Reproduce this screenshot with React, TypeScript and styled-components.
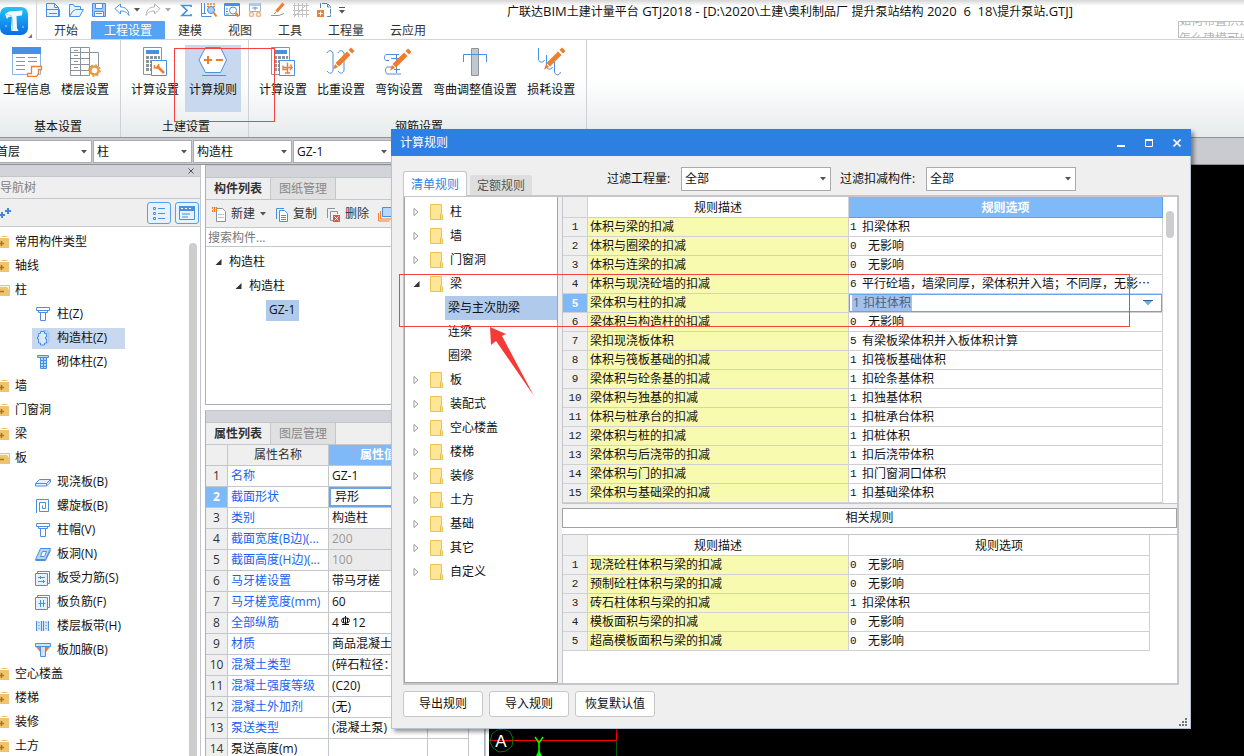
import React from "react";
import styled, { createGlobalStyle } from "styled-components";

const UI = `"Open Sans", "Noto Sans CJK SC", sans-serif`;
const BLUE = "#4a90e2";
const LINE = "#c3c6cb";

const Global = createGlobalStyle`
  * { box-sizing: border-box; }
  html, body { margin: 0; padding: 0; }
  body { font: 12px/18px ${UI}; color: #111; background: #fff; overflow: hidden; }
  button, input, select { font: inherit; color: inherit; margin: 0; padding: 0; border: 0; background: none; border-radius: 0; outline: 0; }
  button { white-space: nowrap; text-align: left; }
  ul { list-style: none; margin: 0; padding: 0; }
  svg { display: block; flex: none; }
  table { border-collapse: separate; border-spacing: 0; table-layout: fixed; }
  th, td { padding: 0; font-weight: normal; }
`;

/* ---------- shell ---------- */

const Shell = styled.div`
  position: relative;
  display: flex;
  flex-direction: column;
  height: 100vh;
  overflow: hidden;
  background: #fff;
`;
const Header = styled.header`
  display: flex;
  height: 40px;
  flex: none;
  background: linear-gradient(#d6d6d6, #fff 6px);
`;
const LogoBox = styled.div`
  display: flex;
  width: 37px;
  flex: none;
  border-right: 1px solid #d4d4d4;
`;
const HeaderMain = styled.div`
  flex: 1;
  display: flex;
  flex-direction: column;
  min-width: 0;
  border-bottom: 1px solid #d2d4d6;
`;
const TitleRow = styled.div`
  display: flex;
  align-items: center;
  height: 20px;
  margin-top: 1px;
`;
const QuickBar = styled.div`
  display: flex;
  align-items: center;
  width: 470px;
  height: 18px;
  padding: 0 0 2px 4px;
  flex: none;
`;
const QuickButton = styled.button<{ $w?: number; $gap?: number }>`
  display: flex;
  justify-content: center;
  align-items: center;
  width: ${(p) => p.$w ?? 23}px;
  margin-right: ${(p) => p.$gap ?? 0}px;
  height: 16px;
`;
const AppTitle = styled.h1`
  margin: 0;
  font-size: 12px;
  font-weight: normal;
  line-height: 18px;
  white-space: pre;
`;
const Latin = styled.span`
  font-size: 13px;
`;
const TabRow = styled.div`
  display: flex;
  justify-content: space-between;
  height: 18px;
`;
const MenuTabs = styled.nav`
  display: flex;
  padding-left: 4px;
`;
const MenuTab = styled.button<{ $on?: boolean }>`
  height: 18px;
  padding: 1px 13px 0;
  color: ${(p) => (p.$on ? "#fff" : "#333")};
  background: ${(p) => (p.$on ? "#55a3f5" : "transparent")};
  border-radius: 1px 1px 0 0;
`;
const Tips = styled.div`
  display: flex;
  flex-direction: column;
  justify-content: center;
  width: 66px;
  height: 17px;
  border: 1px solid #bdbdbd;
  border-right: 0;
  overflow: hidden;
  white-space: nowrap;
  color: #b5b5b5;
`;

/* ---------- ribbon ---------- */

const Ribbon = styled.div`
  display: flex;
  flex: none;
  height: 97px;
  margin-left: -8px;
  background: linear-gradient(#fff 40%, #e7ebec);
`;
const Group = styled.section`
  display: flex;
  flex-direction: column;
  justify-content: space-between;
  padding: 5px 6px 1px 5px;
  border-right: 1px solid #cfd2d5;
  &:first-child { padding-left: 6px; }
`;
const GroupItems = styled.div`
  display: flex;
`;
const GroupName = styled.div`
  padding-left: 4px;
  text-align: center;
`;
const Tool = styled.button<{ $on?: boolean }>`
  display: flex;
  flex-direction: column;
  align-items: center;
  gap: 4px;
  height: 67px;
  margin: 0 1px;
  padding: 0 4px;
  background: ${(p) => (p.$on ? "#c8d8ef" : "transparent")};
`;

/* ---------- selectors ---------- */

const PickerBar = styled.div`
  display: flex;
  gap: 1px;
  flex: none;
  height: 28px;
  padding: 2px 0;
  margin-left: -8px;
  background: #c9cbd0;
  border-top: 1px solid #8e9297;
  border-bottom: 1px solid #8d919b;
`;
const Picker = styled.span<{ $w: number; $h?: number }>`
  position: relative;
  display: inline-block;
  width: ${(p) => p.$w}px;
  height: ${(p) => p.$h ?? 23}px;
  border: 1px solid #a9abae;
  background: #fff;
  select {
    appearance: none;
    width: 100%;
    height: 100%;
    padding: 0 3px;
    line-height: 20px;
  }
  svg {
    position: absolute;
    right: 4px;
    top: 9px;
    pointer-events: none;
  }
`;

/* ---------- work area ---------- */

const Work = styled.div`
  display: flex;
  flex: 1;
  min-height: 0;
`;
const NavPanel = styled.aside`
  display: flex;
  flex-direction: column;
  width: 201px;
  flex: none;
  border-right: 1px solid ${LINE};
`;
const Grip = styled.div`
  display: flex;
  justify-content: flex-end;
  align-items: center;
  height: 12px;
  flex: none;
  padding-right: 6px;
  background: #d3d4da;
  border-bottom: 1px solid ${LINE};
  color: #666;
`;
const NavTitle = styled.div`
  height: 22px;
  flex: none;
  line-height: 22px;
  background: #efefef;
  color: #808080;
  border-bottom: 1px solid ${LINE};
`;
const NavTools = styled.div`
  display: flex;
  align-items: center;
  gap: 4px;
  height: 28px;
  flex: none;
  padding-right: 1px;
  background: #efefef;
  border-bottom: 1px solid ${LINE};
`;
const IconButton = styled.button<{ $box?: boolean }>`
  display: flex;
  align-items: center;
  justify-content: center;
  ${(p) => (p.$box ? `width: 24px; height: 22px; border: 1px solid #57a0ee; border-radius: 3px; background: #e7f2fd;` : `margin-right: auto;`)}
`;
const NavBody = styled.div`
  display: flex;
  justify-content: space-between;
  flex: 1;
  min-height: 0;
  overflow: hidden;
`;
const NavList = styled.ul`
  padding-top: 3px;
`;
const NavRow = styled.li`
  display: flex;
  align-items: center;
  height: 24px;
`;
const NavFolder = styled.button`
  display: flex;
  align-items: center;
  gap: 5px;
`;
const NavLeaf = styled.button<{ $on?: boolean }>`
  display: flex;
  align-items: center;
  gap: 6px;
  height: 21px;
  margin-left: 32px;
  padding: 0 18px 0 3px;
  background: ${(p) => (p.$on ? "#c8d8ef" : "transparent")};
`;
const NavThumb = styled.div`
  width: 8px;
  margin: 16px 3px 0 0;
  border-radius: 4px 4px 0 0;
  background: #cdcdcd;
`;

const Center = styled.div`
  display: flex;
  flex-direction: column;
  gap: 5px;
  width: 281px;
  flex: none;
  margin: 0 3px 0 4px;
  overflow: hidden;
  border-right: 1px solid ${LINE};
`;
const Panel = styled.section<{ $h?: number }>`
  display: flex;
  flex-direction: column;
  height: ${(p) => (p.$h ? `${p.$h}px` : "auto")};
  flex: none;
  border: 1px solid #adb0b5;
  border-top-color: ${LINE};
`;
const PanelTabs = styled.div`
  display: flex;
  height: 22px;
  flex: none;
  background: #efefef;
  border-bottom: 1px solid ${LINE};
`;
const PanelTab = styled.button<{ $on?: boolean }>`
  padding: 0 8px;
  line-height: 21px;
  border-right: 1px solid ${LINE};
  font-weight: ${(p) => (p.$on ? 600 : 400)};
  color: ${(p) => (p.$on ? "#333" : "#888")};
  background: ${(p) => (p.$on ? "#efefef" : "#e0e0e0")};
`;
const PanelTools = styled.div`
  display: flex;
  align-items: center;
  gap: 9px;
  height: 28px;
  flex: none;
  padding: 1px 0 0 6px;
  background: #efefef;
  border-bottom: 1px solid ${LINE};
`;
const PanelTool = styled.button`
  display: flex;
  align-items: center;
  gap: 5px;
  color: #333;
`;
const Search = styled.input`
  height: 19px;
  flex: none;
  padding: 0 2px;
  border-bottom: 1px solid ${LINE};
  &::placeholder { color: #777; opacity: 1; }
`;
const PartTree = styled.ul`
  padding: 3px 0 0 9px;
`;
const PartRow = styled.li<{ $level: number }>`
  display: flex;
  align-items: center;
  height: 24px;
  padding-left: ${(p) => p.$level * 20}px;
`;
const PartItem = styled.button<{ $on?: boolean }>`
  display: flex;
  align-items: center;
  gap: 7px;
  height: 21px;
  padding: 0 ${(p) => (p.$on ? 4 : 0)}px 0 ${(p) => (p.$on ? 3 : 0)}px;
  margin-left: ${(p) => (p.$on ? 11 : 0)}px;
  background: ${(p) => (p.$on ? "#b0caec" : "transparent")};
`;
const PropTable = styled.table`
  width: 263px;
  th, td {
    height: 21px;
    line-height: 20px;
    border-right: 1px solid ${LINE};
    border-bottom: 1px solid ${LINE};
    overflow: hidden;
    white-space: nowrap;
  }
  thead th { background: #efefef; color: #333; }
  thead th:nth-child(3) { background: #80b9f8; color: #fff; font-weight: 600; }
  thead th:nth-child(3), thead th:nth-child(4) { border-right-color: #9cc3ee; }
`;
const PropNo = styled.th<{ $on?: boolean }>`
  text-align: center;
  color: ${(p) => (p.$on ? "#fff" : "#333")};
  background: ${(p) => (p.$on ? "#80b9f8" : "#efefef")};
  font-weight: ${(p) => (p.$on ? 700 : 400)} !important;
`;
const PropName = styled.td<{ $plain?: boolean }>`
  padding-left: 3px;
  color: ${(p) => (p.$plain ? "#111" : "#1a5ff0")};
`;
const PropValue = styled.td<{ $on?: boolean; $off?: boolean }>`
  padding-left: ${(p) => (p.$on ? 6 : 3)}px;
  color: ${(p) => (p.$off ? "#999" : "#111")};
  background: ${(p) => (p.$off ? "#ebebeb" : "#fff")};
  ${(p) => p.$on && "box-shadow: inset 0 0 0 2px #6aa5ea;"}
`;
const Rebar = styled.span`
  display: inline-flex;
  align-items: center;
  gap: 1px;
  vertical-align: top;
  height: 20px;
  svg { margin-bottom: 4px; }
`;
const Canvas = styled.main`
  display: flex;
  align-items: flex-end;
  flex: 1;
  min-width: 0;
  background: #000;
`;

/* ---------- dialog ---------- */

const Dialog = styled.div`
  position: absolute;
  left: 391px;
  top: 129px;
  display: flex;
  flex-direction: column;
  width: 800px;
  height: 600px;
  background: #efefef;
  border: 1px solid #b4c3d8;
  border-top: 0;
  box-shadow: 3px 3px 4px rgba(0, 0, 0, 0.4);
`;
const DialogBar = styled.div`
  display: flex;
  align-items: center;
  height: 27px;
  flex: none;
  margin: 0 -1px;
  padding: 0 9px;
  background: #2d7fe1;
  color: #fff;
`;
const DialogTitle = styled.h2`
  flex: 1;
  margin: 0;
  font-size: 12px;
  font-weight: normal;
`;
const WindowButton = styled.button`
  display: flex;
  justify-content: center;
  width: 28px;
  &:last-child { width: 10px; margin-left: 9px; }
`;
const DialogTop = styled.div`
  display: flex;
  align-items: flex-end;
  height: 40px;
  flex: none;
  padding-left: 11px;
`;
const DialogTab = styled.button<{ $on?: boolean }>`
  position: relative;
  z-index: 1;
  height: ${(p) => (p.$on ? 25 : 20)}px;
  margin: 0 3px ${(p) => (p.$on ? 0 : 1)}px 0;
  padding: 1px 7px 0;
  border: ${(p) => (p.$on ? `1px solid ${LINE}` : "0")};
  border-bottom: 0;
  border-radius: 3px 3px 0 0;
  color: ${(p) => (p.$on ? "#2d84ea" : "#555")};
  background: ${(p) => (p.$on ? "#fff" : "#dedede")};
`;
const Filters = styled.div`
  display: flex;
  align-items: center;
  height: 24px;
  margin: 0 0 5px 72px;
`;
const FilterLabel = styled.label`
  width: 74px;
  white-space: nowrap;
  & ~ & { width: 86px; margin-left: 9px; }
`;
const Frame = styled.div`
  display: flex;
  gap: 4px;
  flex: 1;
  min-height: 0;
  margin: -1px 11px 0;
  border: 2px solid #c4c6cb;
  border-left-width: 1px;
`;
const RuleTree = styled.ul`
  width: 154px;
  flex: none;
  padding-top: 3px;
  border: 1px solid #a2a4a8;
  border-top: 0;
  background: #fff;
`;
const RuleRow = styled.button`
  display: flex;
  align-items: center;
  width: 100%;
  height: 24px;
  padding-left: 8px;
  svg + svg { margin: 0 7px 0 10px; }
`;
const RuleChild = styled.button<{ $on?: boolean }>`
  display: block;
  width: calc(100% - 40px);
  height: 24px;
  margin-left: 40px;
  padding-left: 3px;
  background: ${(p) => (p.$on ? "#b0caec" : "transparent")};
`;
const RuleColumn = styled.div`
  display: flex;
  flex-direction: column;
  flex: 1;
  min-width: 0;
`;
const RulePane = styled.div<{ $rest?: boolean }>`
  display: flex;
  justify-content: space-between;
  align-items: flex-start;
  background: #fff;
  border-left: 1px solid ${LINE};
  border-bottom: 1px solid ${LINE};
  ${(p) => p.$rest && `flex: 1; border-bottom: 0; border-top: 1px solid ${LINE};`}
`;
const RuleGrid = styled.table<{ $narrow?: boolean }>`
  width: ${(p) => (p.$narrow ? 587 : 600)}px;
  thead th { height: 21px; padding-top: 1px; background: #fff; }
  tbody th, tbody td { height: 19px; line-height: 18px; }
  th, td {
    border-right: 1px solid #cfd1d4;
    border-bottom: 1px solid #cfd1d4;
    white-space: nowrap;
    overflow: hidden;
  }
  thead th:first-child { background: #efefef; }
`;
const HotHead = styled.th<{ $on?: boolean }>`
  ${(p) => p.$on && `&&&& { background: #80b9f8; border-color: #5e9fe8; } color: #fff; font-weight: 700;`}
`;
const RuleNo = styled.th<{ $on?: boolean }>`
  font-family: ${(p) => (p.$on ? `"Liberation Sans"` : `"Liberation Mono"`)}, monospace;
  font-size: 11px;
  font-weight: ${(p) => (p.$on ? 700 : 400)};
  color: ${(p) => (p.$on ? "#fff" : "#222")};
  background: ${(p) => (p.$on ? "#80b9f8" : "#efefef")};
`;
const RuleText = styled.td`
  padding-left: 2px;
  background: #f8fab0;
`;
const RuleOption = styled.td<{ $edit?: boolean }>`
  padding-left: 1px;
  background: #fff;
  ${(p) => p.$edit && "box-shadow: inset 0 0 0 1px #6aa5ea;"}
`;
const Code = styled.span<{ $wide?: boolean }>`
  display: inline-block;
  width: ${(p) => (p.$wide ? 18 : 12)}px;
  height: 18px;
  vertical-align: top;
  font-family: "Liberation Mono", monospace;
  font-size: 11px;
`;
const Editor = styled.div`
  display: flex;
  align-items: center;
  justify-content: space-between;
  height: 18px;
  padding: 0 9px 0 2px;
`;
const EditorInput = styled.input`
  width: 60px;
  height: 16px;
  padding-left: 1px;
  color: #4d617c;
  background: #a3c1ea;
`;
const RuleThumb = styled.div`
  width: 8px;
  height: 27px;
  margin: 14px 3px 0 0;
  border-radius: 4px;
  background: #cdcdcd;
`;
const RelatedBar = styled.div`
  height: 20px;
  flex: none;
  margin: 4px 0 0;
  border: 1px solid #a0a2a5;
  background: #fff;
  text-align: center;
`;
const RelatedGap = styled.div`
  height: 6px;
  flex: none;
  background: #fff;
`;
const DialogFoot = styled.div`
  display: flex;
  align-items: flex-start;
  gap: 6px;
  height: 43px;
  flex: none;
  padding: 6px 3px 2px 11px;
  svg { margin: auto 0 0 auto; }
`;
const PushButton = styled.button`
  width: 80px;
  height: 26px;
  border: 1px solid #c5c7ca;
  border-radius: 3px;
  background: #fff;
  text-align: center;
`;

/* ---------- annotations ---------- */

const Mark = styled.div<{ $x: number; $y: number; $w: number; $h: number }>`
  position: absolute;
  left: ${(p) => p.$x}px;
  top: ${(p) => p.$y}px;
  width: ${(p) => p.$w}px;
  height: ${(p) => p.$h}px;
  border: 1px solid #f5413f;
  pointer-events: none;
`;
const Pointer = styled.svg`
  position: absolute;
  left: 485px;
  top: 323px;
  pointer-events: none;
`;

/* ---------- icons ---------- */

const OR = "#f08030";
const GR = "#8a949c";

const Caret = ({ c = "#555" }: { c?: string }) => (
  <svg width="6" height="4" viewBox="0 0 6 4"><path d="M0 0h6L3 3.5z" fill={c} /></svg>
);
const Svg = ({ w = 16, h = 16, children }: { w?: number; h?: number; children: React.ReactNode }) => (
  <svg width={w} height={h} viewBox={`0 0 ${w} ${h}`} fill="none" stroke={BLUE}>{children}</svg>
);

const Logo = () => (
  <svg width="36" height="40" viewBox="0 0 36 40">
    <defs>
      <linearGradient id="lg" x1="0" y1="0" x2="0" y2="1">
        <stop offset="0" stopColor="#22c3fb" /><stop offset="1" stopColor="#0a6ce0" />
      </linearGradient>
    </defs>
    <rect x="0" y="7" width="28" height="28" rx="7" fill="url(#lg)" />
    <path d="M5 14l4-2.500 13.500-1-.5 5-5.500.5.5 12 1.500 3h-7l-.5-3 1-11.500-3.500.5-1.500 2z" fill="#f2fbff" />
    <path d="M12.500 18v12M6 14l6 2" stroke="#a8dcfa" strokeWidth="1" />
    <path d="M32 34v4h-4z" fill="#777" />
    <circle cx="6" cy="26" r=".7" fill="#fff" /><circle cx="23" cy="27" r=".7" fill="#fff" />
  </svg>
);

const quick = {
  save: <Svg><path d="M1.500 1.500h8l4 4v9h-12zM9.500 1.500v4h4M1.500 7.500h13v7h-13zM4 11.500h8" fill="#e8f2fd" /></Svg>,
  open: <Svg><path d="M1.500 14.500v-12h4l1 2h6v3M1.500 14.500l3-5 3-2h8l-4 7z" fill="#e8f2fd" /></Svg>,
  disk: <Svg><path d="M1.500 1.500h13v13h-13z" fill="#a8ccf5" /><path d="M4.500 1.500h7v5h-7zM3.500 9.500h9v5h-9zM5 11.500h6" fill="#fff" /></Svg>,
  undo: <Svg><path d="M1 6.500L6.500 2v3c5 0 8 2.500 8.500 8.500-2-3.500-4.500-4.500-8.500-4.500v3z" /></Svg>,
  redo: <Svg><path d="M15 6.500L9.500 2v3c-5 0-8 2.500-8.500 8.500 2-3.500 4.500-4.500 8.500-4.500v3z" stroke="#b4b4b4" /></Svg>,
  sum: <Svg><path d="M13 5V3.500H4L9 8.500l-5 5h9V12" strokeWidth="1.700" /></Svg>,
  find: <Svg><path d="M.5 1v13.500h10M3.500 1v10M1 11.500h4" /><path d="M6 2h8M6 4.500h8" stroke={OR} strokeDasharray="2 1" strokeWidth="1.500" /><circle cx="10" cy="8" r="3.500" fill="#a8ccf5" /><path d="M12.500 10.500l3 4" stroke={OR} strokeWidth="2" /></Svg>,
  view: <Svg><path d="M.5 1.500h15v12H.5z" /><path d="M1 2.500h14" strokeWidth="3" /><circle cx="9" cy="8.500" r="3.500" fill="#fff" /><path d="M2 7h2M2 9.500h2M2 12h3" /><path d="M11.500 11l3 3.500" stroke={OR} strokeWidth="2.500" /></Svg>,
  sheet: <Svg><path d="M2.500 1.500h11v8h-11z" stroke="#9fb3c8" /><path d="M3 2.500h10" strokeWidth="3" stroke="#a8ccf5" /><path d="M5 6h6M8 4.500v4" stroke={GR} /><circle cx="4.500" cy="12.500" r="2" stroke="#f3b489" strokeWidth="1.500" /><circle cx="11.500" cy="12.500" r="2" stroke="#f3b489" strokeWidth="1.500" /></Svg>,
  pen: <Svg><path d="M13.500 1.500l-7 8" stroke={OR} strokeWidth="3" /><path d="M6.500 9.500L4 12" stroke={OR} /><path d="M1 13.500h8l5-2" stroke="#999" /></Svg>,
  mesh: <Svg><path d="M1.500 1v14M5.500 1v14M9.500 1v14M13.500 1v14M0 3.500h16M0 8.500h16M0 12.500h16M2 14L14 2" stroke="#c2c2c2" /></Svg>,
  add: <Svg><path d="M4.500 6V1.500h7l3 3v10H10M11.500 2v3h3" strokeDasharray="5 1" stroke="#5c7f9f" /><path d="M1 8h7v7H1z" fill={OR} stroke="none" /><path d="M4.500 9.500v4M2.500 11.500h4" stroke="#fff" /></Svg>,
};

const Pencil = ({ x, y }: { x: number; y: number }) => (
  <g transform={`translate(${x} ${y})`} stroke="none" fill="#f07d2c">
    <path d="M14 3.500l3.500 3.500L6 18.500 2.500 15zM15.500 2l2.500-2.500L21.500 3 19 5.500zM2 16l3 3-5 2.500z" />
  </g>
);
const CalcBase = () => (
  <>
    <path d="M4.500.5h18v27h-18z" stroke={GR} fill="#fff" />
    <path d="M7 3h13v4H7z" fill={BLUE} stroke="none" />
    <path d="M7 10.500h14M7 14.500h14M7 18.500h14M7 22.500h14" stroke={GR} strokeWidth="3" strokeDasharray="3 1" />
    <path d="M12.500 13.500h15v15h-15z" fill="#fff" />
  </>
);
const big = {
  info: <Svg w={32} h={32}><path d="M1.500 2.500h28v27h-28z" stroke="#8ab4e8" fill="#fff" /><path d="M1 2h29v7H1z" fill={BLUE} stroke="none" /><path d="M5 12.500h9M17 12.500h9M5 16.500h9M17 16.500h9M5 20.500h9M5 24.500h9" stroke={GR} /><path d="M20.500 21.500h10v3h-3v4l-2 3h-9v-3h4z" stroke={OR} fill="#fff" strokeWidth="1.300" /></Svg>,
  floor: <Svg w={32} h={32}><path d="M1.500 2.500h19v28h-19zM1.500 7.500h19M1.500 13.500h19M1.500 19.500h19M1.500 25.500h19M11.500 2.500v28M5 5.500h4M5 10.500h4M5 16.500h4M5 22.500h4M20.500 7.500h9v14h-9" stroke={GR} /><circle cx="25.500" cy="25.500" r="4" stroke="#e89a45" fill="#fff" strokeWidth="2.400" /><circle cx="25.500" cy="25.500" r="5.600" stroke="#e89a45" strokeDasharray="2 2.400" strokeWidth="1.600" /></Svg>,
  calc: <Svg w={32} h={32}><g transform="translate(0 2)"><CalcBase /><path d="M18 19l7 7" stroke={OR} strokeWidth="2.600" /><path d="M15.500 18v3h4v-4" stroke={OR} strokeWidth="1.500" /></g></Svg>,
  rule: <Svg w={32} h={32}><path d="M8.500 2.500h15l6 12.500-6 12.500h-15L2 15z" fill="#fff" /><path d="M7 15h8M11 11v8M19 15h7" stroke="#f07d2c" strokeWidth="2" /><path d="M5 30.500h24" /></Svg>,
  calc2: <Svg w={32} h={32}><g transform="translate(0 2)"><CalcBase /><path d="M20.500 15.500v11M16 20.500h9l-1.500-3M25 20.500l-2 2.500M16 18.500v4h4M18 26h5" stroke="#f07d2c" strokeWidth="1.400" /></g></Svg>,
  weight: <Svg w={32} h={32}><path d="M2 8c1-3 5-3 6 0v17c-.5 4-4 4-6 1M13 8c1-3 5-3 6 0v17c-.5 4-4 4-6 1" /><Pencil x={8} y={3} /></Svg>,
  hook: <Svg w={32} h={32}><path d="M3 9.500h13M3 9.500c-2 2-2 5 0 6h3M15 13.500H8M11 22h-7c-2 1-2 5 0 7h14M13.500 10v18M11 13.500h6M11 24.500h6" /><Pencil x={7} y={4} /></Svg>,
  bend: <Svg w={32} h={32}><path d="M12.500 3.500h7v27h-7z" fill="#c3c8cc" stroke={GR} /><path d="M4.500 17V9.500h23V17" /></Svg>,
  loss: <Svg w={32} h={32}><path d="M3.500 3v11c0 4 5 4 6 1M11.500 10v11c0 4 5 4 6 1M19.500 17v9c0 5 5 5 6 1" /><Pencil x={9} y={3} /></Svg>,
};

const navIcons: Record<string, React.ReactNode> = {
  column: <path d="M1.500 1.500h13v3h-13zM3.500 4.500h9v2h-9zM5.500 6.500h5v8h-5z" fill="#fff" />,
  tie: <><path d="M8 .500h4l2 3v8l-2 2" fill="#b9d5f6" stroke="#9cc3ee" /><path d="M5.500 1.500h4v2h2v3.500h-1v2h1V13h-2v2h-4v-2h-2V9h-1V7h1V3.500h2z" fill="#dbe9fa" /></>,
  brick: <><path d="M2.500 1.500h11v2h-11zM5.500 3.500h6v11h-6z" fill="#b9d5f6" /><path d="M5.500 6.500h6M5.500 9.500h6M5.500 12.500h6M8.500 4v10" /></>,
  slab: <path d="M.5 9.500l4-4h11v2.500l-4 4H.500zM.5 9.500h11v2.500M11.500 9.500l4-4" fill="#e6f1fd" />,
  spiral: <path d="M1.500 15v-13.500h12v12H4.500v-9h6v6H7.500v-3" />,
  hole: <><path d="M5.500 2.500h10l-5 11H.5z" fill="#b9d5f6" /><path d="M7.500 5.500h4l-2 5h-4z" fill="#fff" /><path d="M.5 14.500h10l5-10" /></>,
  bar: <><path d="M.5 3.500h12v12H.5z" fill="#e6f1fd" /><path d="M2.500 3V1.500h12v12H13M3 7.500h7M3 11.500h7M5.500 6v3M8.500 10v3" /></>,
  neg: <><path d="M.5 3.500h12v12H.5z" fill="#e6f1fd" /><path d="M2.500 3V1.500h12v12H13M5.500 6v7M8.500 6v7M3.500 9.500h7" /></>,
  strip: <><path d="M1 3h13v10H1z" fill="#d3e5fa" stroke="none" /><path d="M1.500 3v10M13.500 3v10M6.500 3v10M8.500 3v10" /><path d="M4 4v9M11 4v9" strokeDasharray="1 2" /></>,
  haunch: <><path d="M1 5h14l-4 5H5z" fill="#f07d2c" stroke="none" /><path d="M.5 1.500h15v3H.500zM5.500 4.500h5v10h-5z" fill="#cfe2fa" /></>,
};

const NavFolderIcon = ({ open }: { open?: boolean }) => (
  <svg width="10" height="14" viewBox="0 0 10 14">
    <path d={open ? "M0 2h10v11H0z" : "M0 3h9v10H0zM2 1h5l1 1H1z"} fill="#efc46f" />
    {open ? <path d="M0 4h7l2 3v-4H0z" fill="#fff3d8" /> : null}
    <path d={open ? "M0 8.500h4" : "M0 8.500h4M1.500 6v5"} stroke="#a87622" strokeWidth="1.500" />
  </svg>
);
const Folder = () => (
  <svg width="13" height="16" viewBox="0 0 13 16">
    <path d="M.5.5h11v9l1 1v5H.500z" fill="#fde696" stroke="#ecc352" />
    <path d="M10.500 15V9.500" stroke="#e5b94a" />
  </svg>
);
const Twist = ({ open }: { open?: boolean }) => (
  <svg width="7" height="8" viewBox="0 0 7 8">
    {open ? <path d="M6.500 1v6H.5z" fill="#333" /> : <path d="M1 .5v7L5 4z" fill="#fff" stroke="#999" />}
  </svg>
);

/* ---------- data ---------- */

type NavEntry = { t: string; icon?: string; open?: boolean; on?: boolean };
const nav: NavEntry[] = [
  { t: "常用构件类型" }, { t: "轴线" }, { t: "柱", open: true },
  { t: "柱(Z)", icon: "column" }, { t: "构造柱(Z)", icon: "tie", on: true }, { t: "砌体柱(Z)", icon: "brick" },
  { t: "墙" }, { t: "门窗洞" }, { t: "梁" }, { t: "板", open: true },
  { t: "现浇板(B)", icon: "slab" }, { t: "螺旋板(B)", icon: "spiral" }, { t: "柱帽(V)", icon: "column" },
  { t: "板洞(N)", icon: "hole" }, { t: "板受力筋(S)", icon: "bar" }, { t: "板负筋(F)", icon: "neg" },
  { t: "楼层板带(H)", icon: "strip" }, { t: "板加腋(B)", icon: "haunch" },
  { t: "空心楼盖" }, { t: "楼梯" }, { t: "装修" }, { t: "土方" },
];

const ribbon = [
  { name: "基本设置", items: [["工程信息", big.info], ["楼层设置", big.floor]] },
  { name: "土建设置", items: [["计算设置", big.calc], ["计算规则", big.rule]] },
  { name: "钢筋设置", items: [["计算设置", big.calc2], ["比重设置", big.weight], ["弯钩设置", big.hook], ["弯曲调整值设置", big.bend], ["损耗设置", big.loss]] },
] as { name: string; items: [string, React.ReactNode][] }[];

const RebarSign = () => (
  <svg width="11" height="10" viewBox="0 0 11 10" fill="none" stroke="#111">
    <ellipse cx="5.500" cy="4.500" rx="4" ry="2.700" /><path d="M5.500 0v9M3.500 2v5M7.500 2v5M2 8.500h7" />
  </svg>
);

const props: { n: string; v: React.ReactNode; on?: boolean; off?: boolean; plain?: boolean }[] = [
  { n: "名称", v: "GZ-1" },
  { n: "截面形状", v: "异形", on: true },
  { n: "类别", v: "构造柱" },
  { n: "截面宽度(B边)(...", v: "200", off: true },
  { n: "截面高度(H边)(...", v: "100", off: true },
  { n: "马牙槎设置", v: "带马牙槎" },
  { n: "马牙槎宽度(mm)", v: "60" },
  { n: "全部纵筋", v: <Rebar>4<RebarSign />12</Rebar> },
  { n: "材质", v: "商品混凝土" },
  { n: "混凝土类型", v: "(碎石粒径：" },
  { n: "混凝土强度等级", v: "(C20)" },
  { n: "混凝土外加剂", v: "(无)" },
  { n: "泵送类型", v: "(混凝土泵)" },
  { n: "泵送高度(m)", v: "", plain: true },
];

type Rule = [string, string, string];
const rules: Rule[] = [
  ["体积与梁的扣减", "1", "扣梁体积"],
  ["体积与圈梁的扣减", "0", "无影响"],
  ["体积与连梁的扣减", "0", "无影响"],
  ["体积与现浇砼墙的扣减", "6", "平行砼墙，墙梁同厚，梁体积并入墙；不同厚，无影⋯"],
  ["梁体积与柱的扣减", "1", "扣柱体积"],
  ["梁体积与构造柱的扣减", "0", "无影响"],
  ["梁扣现浇板体积", "5", "有梁板梁体积并入板体积计算"],
  ["体积与筏板基础的扣减", "1", "扣筏板基础体积"],
  ["梁体积与砼条基的扣减", "1", "扣砼条基体积"],
  ["梁体积与独基的扣减", "1", "扣独基体积"],
  ["体积与桩承台的扣减", "1", "扣桩承台体积"],
  ["梁体积与桩的扣减", "1", "扣桩体积"],
  ["梁体积与后浇带的扣减", "1", "扣后浇带体积"],
  ["梁体积与门的扣减", "1", "扣门窗洞口体积"],
  ["梁体积与基础梁的扣减", "1", "扣基础梁体积"],
];
const related: Rule[] = [
  ["现浇砼柱体积与梁的扣减", "0", "无影响"],
  ["预制砼柱体积与梁的扣减", "0", "无影响"],
  ["砖石柱体积与梁的扣减", "1", "扣梁体积"],
  ["模板面积与梁的扣减", "0", "无影响"],
  ["超高模板面积与梁的扣减", "0", "无影响"],
];

/* ---------- parts ---------- */

const Select = ({ id, label, value, w, h }: { id: string; label?: string; value: string; w: number; h?: number }) => (
  <Picker $w={w} $h={h}>
    <select id={id} aria-label={label} defaultValue={value}><option>{value}</option></select>
    <Caret />
  </Picker>
);

const Rules = ({ rows, active, narrow }: { rows: Rule[]; active?: number; narrow?: boolean }) => (
  <RuleGrid $narrow={narrow}>
    <colgroup><col style={{ width: 25 }} /><col style={{ width: 261 }} /><col /></colgroup>
    <thead><tr><th aria-label="序号" /><th>规则描述</th><HotHead $on={active !== undefined}>规则选项</HotHead></tr></thead>
    <tbody>
      {rows.map(([d, code, text], i) => (
        <tr key={d}>
          <RuleNo $on={i === active}>{i + 1}</RuleNo>
          <RuleText>{d}</RuleText>
          {i === active ? (
            <RuleOption $edit>
              <Editor>
                <EditorInput aria-label={d} defaultValue={`${code} ${text}`} />
                <button aria-label="展开选项">
                  <svg width="10" height="6" viewBox="0 0 10 6"><path d="M0 0h10L5 5.500z" fill="#6fb0e4" /><path d="M0 .5h10" stroke="#2a5f95" /></svg>
                </button>
              </Editor>
            </RuleOption>
          ) : (
            <RuleOption><Code $wide={code === "0"}>{code}</Code>{text}</RuleOption>
          )}
        </tr>
      ))}
    </tbody>
  </RuleGrid>
);

const RuleFolder = ({ t, open }: { t: string; open?: boolean }) => (
  <li><RuleRow><Twist open={open} /><Folder />{t}</RuleRow></li>
);

export default function App() {
  return (
    <Shell>
      <Global />
      <Header>
        <LogoBox><Logo /></LogoBox>
        <HeaderMain>
          <TitleRow>
            <QuickBar>
              <QuickButton aria-label="新建">{quick.save}</QuickButton>
              <QuickButton aria-label="打开">{quick.open}</QuickButton>
              <QuickButton aria-label="保存">{quick.disk}</QuickButton>
              <QuickButton aria-label="撤销">{quick.undo}</QuickButton>
              <QuickButton $w={8} aria-label="撤销列表"><Caret /></QuickButton>
              <QuickButton aria-label="恢复">{quick.redo}</QuickButton>
              <QuickButton $w={8} $gap={2} aria-label="恢复列表"><Caret c="#aaa" /></QuickButton>
              <QuickButton aria-label="汇总">{quick.sum}</QuickButton>
              <QuickButton aria-label="查找">{quick.find}</QuickButton>
              <QuickButton aria-label="查看">{quick.view}</QuickButton>
              <QuickButton aria-label="报表">{quick.sheet}</QuickButton>
              <QuickButton aria-label="编辑">{quick.pen}</QuickButton>
              <QuickButton aria-label="网格">{quick.mesh}</QuickButton>
              <QuickButton aria-label="添加">{quick.add}</QuickButton>
              <QuickButton $w={14} aria-label="自定义">
                <svg width="6" height="7" viewBox="0 0 6 7"><path d="M0 .5h6" stroke="#555" /><path d="M0 3h6L3 6.500z" fill="#555" /></svg>
              </QuickButton>
            </QuickBar>
            <AppTitle>
              广联达<Latin>BIM</Latin>土建计量平台<Latin>{" GTJ2018 - [D:\\2020\\"}</Latin>土建<Latin>\</Latin>奥利制品厂<Latin> </Latin>提升泵站结构<Latin>{" 2020  6  18\\"}</Latin>提升泵站<Latin>.GTJ]</Latin>
            </AppTitle>
          </TitleRow>
          <TabRow>
            <MenuTabs>
              {["开始", "工程设置", "建模", "视图", "工具", "工程量", "云应用"].map((t) => (
                <MenuTab key={t} $on={t === "工程设置"}>{t}</MenuTab>
              ))}
            </MenuTabs>
            <Tips><span>如何布置拱过</span><span>怎么建模可以</span></Tips>
          </TabRow>
        </HeaderMain>
      </Header>

      <Ribbon>
        {ribbon.map((g) => (
          <Group key={g.name}>
            <GroupItems>
              {g.items.map(([t, icon]) => (
                <Tool key={t} $on={t === "计算规则"}>{icon}{t}</Tool>
              ))}
            </GroupItems>
            <GroupName>{g.name}</GroupName>
          </Group>
        ))}
      </Ribbon>

      <PickerBar>
        <Select id="floor" label="楼层" value="首层" w={100} />
        <Select id="kind" label="构件大类" value="柱" w={99} />
        <Select id="type" label="构件类型" value="构造柱" w={99} />
        <Select id="part" label="构件" value="GZ-1" w={99} />
      </PickerBar>

      <Work>
        <NavPanel>
          <Grip>
            <button aria-label="关闭导航树"><svg width="6" height="6" viewBox="0 0 6 6" stroke="#555"><path d="M.5.5l5 5M5.500.5l-5 5" /></svg></button>
          </Grip>
          <NavTitle>导航树</NavTitle>
          <NavTools>
            <IconButton aria-label="全部展开">
              <svg width="12" height="12" viewBox="0 0 12 12" stroke="#3f87d8" strokeWidth="2"><path d="M0 8h5M2 5v6M5 4h6M8 1v6" /></svg>
            </IconButton>
            <IconButton $box aria-label="列表">
              <Svg w={14} h={14}><path d="M1.500 1.500h2v2h-2zM1.500 6.500h2v2h-2zM1.500 11.500h2v2h-2zM6 2.500h7M6 7.500h7M6 12.500h7" /></Svg>
            </IconButton>
            <IconButton $box aria-label="窗口">
              <Svg w={16} h={14}><path d="M.5.5h15v13H.5z" /><path d="M0 2.500h16" strokeWidth="5" /><path d="M2 2.500h2M6 2.500h2M10 2.500h2" stroke="#fff" /><path d="M3 8h8M3 11h6" /></Svg>
            </IconButton>
          </NavTools>
          <NavBody>
            <NavList>
              {nav.map((n, i) => (
                <NavRow key={i}>
                  {n.icon ? (
                    <NavLeaf $on={n.on}><Svg>{navIcons[n.icon]}</Svg>{n.t}</NavLeaf>
                  ) : (
                    <NavFolder><NavFolderIcon open={n.open} />{n.t}</NavFolder>
                  )}
                </NavRow>
              ))}
            </NavList>
            <NavThumb />
          </NavBody>
        </NavPanel>

        <Center>
          <Panel $h={240}>
            <Grip />
            <PanelTabs><PanelTab $on>构件列表</PanelTab><PanelTab>图纸管理</PanelTab></PanelTabs>
            <PanelTools>
              <PanelTool>
                <Svg w={14} h={15}><path d="M4.500 1.500h6l3 3v10h-9z" stroke={GR} fill="#fff" /><path d="M6 7.500h6M6 10.500h6" stroke="#c3c6cb" /><path d="M0 1h5M0 4h5M2.500 0v6" stroke={OR} strokeDasharray="1 1" strokeWidth="2" /></Svg>
                新建 <Caret />
              </PanelTool>
              <PanelTool>
                <Svg w={13} h={15}><path d="M9 1.500H1.500V12" /><path d="M4.500 3.500h5l3 3v8h-8z" fill="#fff" /><path d="M6 8.500h5M6 10.500h5M6 12.500h5" /></Svg>
                复制
              </PanelTool>
              <PanelTool>
                <Svg w={14} h={15}><path d="M9 1.500H1.500V11M7 13.500H4.500v-9h7V7" stroke={GR} /><path d="M7 8h7v7H7z" fill="#d9544f" stroke="none" /><path d="M8.500 9.500l4 4M12.500 9.500l-4 4" stroke="#fff" /></Svg>
                删除
              </PanelTool>
              <PanelTool aria-label="层间复制">
                <Svg><path d="M4.500 1.500h14v9h-14z" fill="#b9d8fb" /><path d="M2.500 5v8h11M.5 7v8h11" stroke={OR} /></Svg>
              </PanelTool>
            </PanelTools>
            <Search aria-label="搜索构件" placeholder="搜索构件..." />
            <PartTree>
              <PartRow $level={0}><PartItem><Twist open />构造柱</PartItem></PartRow>
              <PartRow $level={1}><PartItem><Twist open />构造柱</PartItem></PartRow>
              <PartRow $level={2}><PartItem $on>GZ-1</PartItem></PartRow>
            </PartTree>
          </Panel>
          <Panel>
            <Grip />
            <PanelTabs><PanelTab $on>属性列表</PanelTab><PanelTab>图层管理</PanelTab></PanelTabs>
            <PropTable>
              <colgroup><col style={{ width: 22 }} /><col style={{ width: 101 }} /><col style={{ width: 99 }} /><col /></colgroup>
              <thead><tr><th aria-label="序号" /><th>属性名称</th><th>属性值</th><th aria-label="附加" /></tr></thead>
              <tbody>
                {props.map((p, i) => (
                  <tr key={p.n}>
                    <PropNo $on={p.on}>{i + 1}</PropNo>
                    <PropName $plain={p.plain}>{p.n}</PropName>
                    <PropValue $on={p.on} $off={p.off}>{p.v}</PropValue>
                    <td />
                  </tr>
                ))}
              </tbody>
            </PropTable>
          </Panel>
        </Center>

        <Canvas>
          <svg width="130" height="40" viewBox="0 0 130 40" fill="none">
            <path d="M0 24.500h127.500V0" stroke="#f00" />
            <path d="M127.500 25v15" stroke="#0a5a0a" />
            <path d="M8 14l7-1 6 3 3 6-1 8-6 5-7 1-6-4-3-6 2-8z" stroke="#0b7a0b" />
            <text x="12" y="31" fill="#fff" fontSize="17" textAnchor="middle" fontFamily="Liberation Sans, sans-serif">A</text>
            <path d="M46 21l4 6 4-6M50 27v13" stroke="#0f0" strokeWidth="1.500" />
            <path d="M50 34l3 6h-6z" fill="#0f0" />
          </svg>
        </Canvas>
      </Work>

      <Dialog role="dialog" aria-labelledby="dlg">
        <DialogBar>
          <DialogTitle id="dlg">计算规则</DialogTitle>
          <WindowButton aria-label="最小化"><svg width="8" height="8" viewBox="0 0 8 8"><path d="M0 7h8" stroke="#fff" strokeWidth="2" /></svg></WindowButton>
          <WindowButton aria-label="最大化"><svg width="8" height="8" viewBox="0 0 8 8" fill="none" stroke="#fff"><path d="M.5 1v6.500h7V1M0 1h8" /><path d="M0 1h8" strokeWidth="2" /></svg></WindowButton>
          <WindowButton aria-label="关闭"><svg width="8" height="8" viewBox="0 0 8 8" stroke="#fff" strokeWidth="1.600"><path d="M.5.5l7 7M7.500.5l-7 7" /></svg></WindowButton>
        </DialogBar>
        <DialogTop>
          <DialogTab $on>清单规则</DialogTab>
          <DialogTab>定额规则</DialogTab>
          <Filters>
            <FilterLabel htmlFor="f1">过滤工程量:</FilterLabel>
            <Select id="f1" value="全部" w={150} h={24} />
            <FilterLabel htmlFor="f2">过滤扣减构件:</FilterLabel>
            <Select id="f2" value="全部" w={150} h={24} />
          </Filters>
        </DialogTop>
        <Frame>
          <RuleTree>
            {["柱", "墙", "门窗洞"].map((t) => <RuleFolder key={t} t={t} />)}
            <RuleFolder t="梁" open />
            {["梁与主次肋梁", "连梁", "圈梁"].map((t, i) => (
              <li key={t}><RuleChild $on={i === 0}>{t}</RuleChild></li>
            ))}
            {["板", "装配式", "空心楼盖", "楼梯", "装修", "土方", "基础", "其它", "自定义"].map((t) => <RuleFolder key={t} t={t} />)}
          </RuleTree>
          <RuleColumn>
            <RulePane><Rules rows={rules} active={4} /><RuleThumb /></RulePane>
            <RelatedBar>相关规则</RelatedBar>
            <RelatedGap />
            <RulePane $rest><Rules rows={related} narrow /></RulePane>
          </RuleColumn>
        </Frame>
        <DialogFoot>
          <PushButton>导出规则</PushButton>
          <PushButton>导入规则</PushButton>
          <PushButton>恢复默认值</PushButton>
          <svg width="8" height="8" viewBox="0 0 8 8" fill="#70757e"><path d="M6 0h2v2H6zM3 3h2v2H3zM6 3h2v2H6zM0 6h2v2H0zM3 6h2v2H3zM6 6h2v2H6z" /></svg>
        </DialogFoot>
      </Dialog>

      <Mark $x={174} $y={48} $w={101} $h={74} />
      <Mark $x={399} $y={274} $w={731} $h={53} />
      <Pointer width="52" height="76" viewBox="0 0 52 76">
        <path d="M5 4l16 7-4 2 32 60-38-55-5 4z" fill="#f53b38" />
      </Pointer>
    </Shell>
  );
}
